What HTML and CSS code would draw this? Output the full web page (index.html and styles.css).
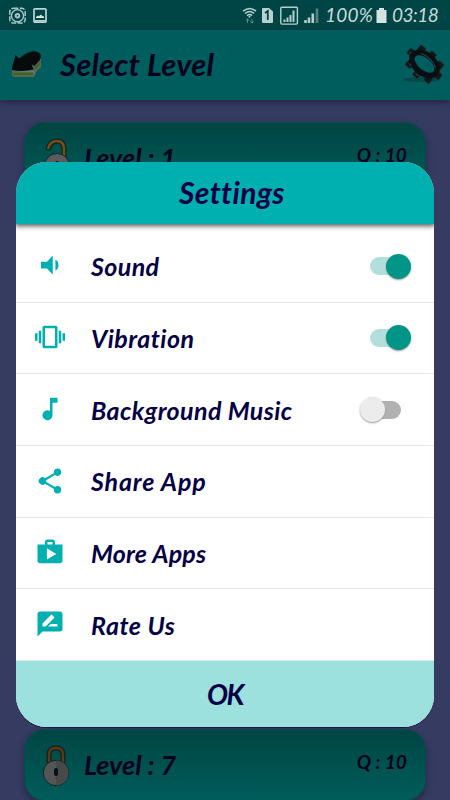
FILE: index.html
```html
<!DOCTYPE html>
<html lang="en">
<head>
<meta charset="utf-8">
<meta name="viewport" content="width=device-width, initial-scale=1">
<title>Settings</title>
<link rel="stylesheet" href="styles.css">
</head>
<body>
<main class="screen">
  <header class="status">
    <svg class="status-left" width="50" height="30" viewBox="0 0 50 30" fill="none" stroke="#a9c9c8">
      <rect x="9.8" y="8.3" width="15.4" height="14.8" rx="3.5" stroke-width="1.5" stroke-dasharray="5 1.5"/>
      <circle cx="17.5" cy="15.7" r="6.1" stroke-width="1.4"/>
      <circle cx="17.5" cy="15.7" r="2.7" fill="#a9c9c8" stroke="none"/>
      <path d="M16.8 14.5v2.4l1.9-1.2z" fill="#004545" stroke="none"/>
      <rect x="34" y="8.8" width="12" height="13.4" rx="1" stroke="#bcd5d4" stroke-width="1.7"/>
      <path d="M36 18v-1l2-1.5 1 .7 2-1.7 1.3 1.4 1.7.5V18z" fill="#d9e7e6" stroke="none"/>
      <path d="M35 20.8h10" stroke="#bcd5d4" stroke-width="1.5"/>
    </svg>
    <div class="status-right">
      <svg width="84" height="30" viewBox="0 0 84 30" fill="none" stroke="#b4cfce">
        <path d="M2 11.2q7-5.5 13 0M4 13.5q4.800-4 9 0M6 15.700q2.800-2.300 5 0" stroke-width="1.500"/>
        <circle cx="8.500" cy="16.700" r="1" fill="#b4cfce" stroke="none"/>
        <path d="M6.500 23v-4m-1.500 1.500 1.500-1.700 1.500 1.700M11 19v4m-1.500-1.500 1.500 1.700 1.500-1.700" stroke="#5f8c8b"/>
        <path d="M22 8h6l4 3.500V22q0 1-1 1h-9q-1 0-1-1V9q0-1 1-1z" fill="#b9d2d1" stroke="none"/>
        <path d="m24 13 2.800-2v9" stroke="#004545" stroke-width="1.800"/>
        <rect x="39.800" y="7.300" width="16.600" height="16.800" rx="1" stroke-width="1.400"/>
        <path d="M43.500 22v-2.500M46.500 22v-4.500M49.500 22v-7M52.500 22V10.500" stroke-width="2"/>
        <path d="M64.500 23v-3M68 23v-5.500M71.800 23v-9.500" stroke-width="2.600"/>
        <path d="M76 23V8.500" stroke="#558483" stroke-width="2.600"/>
      </svg>
      <span class="percent">100%</span>
      <svg class="battery" width="11" height="30" viewBox="0 0 11 30"><path d="M3 8h5v2h2.500v13H.5V10H3z" fill="#d5e4e3"/></svg>
      <span class="clock">03:18</span>
    </div>
  </header>
  <nav class="appbar">
    <svg class="back" width="32" height="30" viewBox="0 0 32 30">
      <path d="M2 18v7q0 2 2 2h20l2-5 5-5V7L20 18z" fill="#59645f"/>
      <path d="M3 23h20v2H3zM24 17l6-5v3l-5 5z" fill="#3c6a10"/>
      <path d="M2 19.500q10 3 21 1.500l2 3" fill="none" stroke="#77807c" stroke-width="1"/>
      <path d="M2 18 5.500 5l4 3.500q5-5 12-7 6-1 9 3 1 3-1 6l-5 5.500-3-2 2 5.500q-11 2.500-21.500.5z" fill="#080b0b"/>
    </svg>
    <h1 class="title">Select Level</h1>
    <svg class="gear" width="42" height="40" viewBox="0 0 42 40">
      <ellipse cx="18" cy="34.500" rx="18" ry="2.500" fill="#044849"/>
      <g transform="translate(21.500 19) rotate(39)" fill="none">
        <g fill="#12191c" stroke="#293236" stroke-width=".6">
          <rect x="-21" y="-4" width="7" height="7" rx="1.500"/><rect x="14" y="-3" width="7" height="7" rx="1.500"/>
          <rect x="-15" y="-13" width="7" height="7" rx="1.500"/><rect x="-3" y="-15" width="7" height="7" rx="1.500"/><rect x="9" y="-12" width="7" height="7" rx="1.500"/>
          <rect x="-15" y="6" width="7" height="7" rx="1.500"/><rect x="-3" y="9" width="7" height="7" rx="1.500"/><rect x="9" y="6" width="7" height="7" rx="1.500"/>
        </g>
        <ellipse rx="14.500" ry="9" stroke="#090f11" stroke-width="5.500"/>
        <path d="M-9-6Q1-10 11-4M-12 9l3 1M-1 13h4M-18-1v3" stroke="#273944" stroke-width="1.200"/>
      </g>
    </svg>
  </nav>
  <section class="levels">
    <article class="card">
      <svg class="lock" width="30" height="46" viewBox="0 0 30 46">
        <path d="M5 12Q7 3 14 3q7 0 7 8v9" fill="none" stroke="#152019" stroke-width="5"/>
        <path d="M5 11Q7 3 14 3q7 0 7 8v9" fill="none" stroke="#74501a" stroke-width="2.500"/>
        <circle cx="14" cy="28" r="12.500" fill="#5b5b5b" stroke="#142624"/><path d="M14 25v4" stroke="#090f18" stroke-width="4" stroke-linecap="round"/>
      </svg>
      <span class="level">Level : 1</span><span class="count">Q : 10</span>
    </article>
    <article class="card">
      <svg class="lock closed" width="30" height="46" viewBox="0 0 30 46">
        <path d="M7 18V10q0-7 7-7 7 0 7 7v8" fill="none" stroke="#151f1a" stroke-width="5"/>
        <path d="M7 18V10q0-7 7-7 7 0 7 7v8" fill="none" stroke="#553b19" stroke-width="2.500"/>
        <circle cx="14" cy="28" r="12.700" fill="#545656" stroke="#102422"/>
        <path d="M14 15.500v25a12.500 12.500 0 0 0 0-25" fill="#484a4a"/><path d="M14 25v4" stroke="#090f18" stroke-width="4" stroke-linecap="round"/>
      </svg>
      <span class="level">Level : 7</span><span class="count">Q : 10</span>
    </article>
  </section>
  <section class="dialog" role="dialog" aria-label="Settings">
    <h2 class="dialog-title">Settings</h2>
    <ul class="options">
      <li><svg class="icon" viewBox="0 0 24 24"><path d="M4.800 8.500V14h4.800l4.600 4.800V3.500L9.600 8.500zM16.300 7v8.500q2.500-1 2.500-4.200t-2.500-4.300z"/></svg><span class="label sound">Sound</span><i class="switch on"></i></li>
      <li><svg class="icon" viewBox="0 0 24 24"><path d="M0 15h2V9H0zm3 2h2V7H3zm19-8v6h2V9zm-3 8h2V7h-2zM16.500 3h-9C6.700 3 6 3.700 6 4.500v15c0 .8.700 1.500 1.500 1.500h9c.8 0 1.500-.7 1.500-1.500v-15c0-.8-.7-1.500-1.500-1.500zM16 19H8V5h8z"/></svg><span class="label vibration">Vibration</span><i class="switch on"></i></li>
      <li><svg class="icon" viewBox="0 0 24 24"><path d="M12 3v10.550A4 4 0 1 0 14 17V7h4V3z"/></svg><span class="label music">Background Music</span><i class="switch"></i></li>
      <li><svg class="icon" viewBox="0 0 24 24"><path d="M18 16.080c-.76 0-1.440.3-1.960.77L8.910 12.700c.05-.23.090-.46.090-.7s-.04-.47-.09-.7l7.050-4.110A3 3 0 1 0 15 5c0 .24.040.47.090.7L8.040 9.810A3 3 0 1 0 8.040 14.190l7.120 4.160c-.05.21-.08.43-.08.650A2.920 2.920 0 1 0 18 16.080z"/></svg><span class="label share">Share App</span></li>
      <li><svg class="icon" viewBox="0 0 24 24"><path fill-rule="evenodd" d="M16 6V4c0-1.110-.89-2-2-2h-4c-1.110 0-2 .89-2 2v2H2v13c0 1.110.89 2 2 2h16c1.110 0 2-.89 2-2V6zm-6-2h4v2h-4zM9.500 18V9l7.500 4.500z"/></svg><span class="label more">More Apps</span></li>
      <li><svg class="icon" viewBox="0 0 24 24"><path fill-rule="evenodd" d="M20 2H4c-1.100 0-2 .9-2 2v18l4-4h14c1.100 0 2-.9 2-2V4c0-1.100-.9-2-2-2zM6 14v-2.470l6.880-6.880c.2-.2.510-.2.710 0l1.770 1.770c.2.200.2.510 0 .710L8.470 14zm12 0h-7.500l2-2H18z"/></svg><span class="label rate">Rate Us</span></li>
    </ul>
    <button class="ok">OK</button>
  </section>
</main>
</body>
</html>
```

FILE: styles.css
```css
* { box-sizing: border-box; }
body { margin: 0; font-family: Lato, "Liberation Sans", sans-serif; }
h1, h2, ul { margin: 0; padding: 0; }
svg { display: block; flex: none; }
.screen { position: relative; width: 450px; height: 800px; overflow: hidden; background: #353b61; font-style: italic; color: #02021d; }
.status { height: 30px; display: flex; justify-content: space-between; background: #004545; color: #c6dada; }
.status-right { display: flex; align-items: center; width: 209px; font-size: 19px; line-height: 30px; white-space: nowrap; }
.percent { width: 49px; letter-spacing: .2px; }
.battery { margin: 0 5px 0 2px; }
.clock { letter-spacing: -.5px; }
.appbar { height: 70px; display: flex; align-items: center; padding: 0 5px 0 10px; background: #005d5d; box-shadow: 0 2px 6px #202541; }
.title { margin: -2px 0 0 18px; font-size: 31px; font-weight: 700; line-height: 40px; letter-spacing: .2px; }
.gear { margin-left: auto; }
.levels { display: flex; flex-direction: column; justify-content: space-between; height: 679px; margin: 22px 24px 0; }
.card { height: 72px; display: flex; align-items: flex-start; padding: 15px 18px 0; border: 1px solid #094947; border-radius: 21px; background: linear-gradient(#004543, #005d5b); box-shadow: 0 3px 6px #242946; }
.lock.closed { margin-left: -1px; margin-right: 1px; }
.level { margin: 3px 0 0 11px; font-size: 27px; font-weight: 700; line-height: 34px; letter-spacing: 0; }
.count { margin: 0 0 0 auto; font-size: 19px; font-weight: 700; line-height: 34px; letter-spacing: .1px; }
.dialog { position: absolute; left: 16px; top: 162px; width: 418px; height: 565px; display: flex; flex-direction: column; overflow: hidden; border-radius: 31px; background: #fff; color: #050044; box-shadow: 0 1px 0 #151944; }
.dialog-title { height: 62px; flex: none; padding-left: 14px; background: #00b0b0; text-align: center; font-size: 30px; font-weight: 700; line-height: 61px; letter-spacing: .4px; box-shadow: 0 1px 5px 1px #555; z-index: 1; }
.options { list-style: none; padding-top: 7px; height: 438px; display: grid; grid-template-rows: repeat(6, 1fr); }
.options li { display: flex; align-items: center; padding: 0 23px 0 19px; border-bottom: 1px solid #e5e5e5; }
.icon { width: 30px; height: 30px; margin-bottom: 1px; fill: #00b0b0; }
.label { margin-left: 26px; font-size: 25px; font-weight: 700; line-height: 34px; white-space: nowrap; }
.sound { letter-spacing: .4px; }
.vibration { letter-spacing: .5px; }
.music { letter-spacing: .4px; }
.share { letter-spacing: .85px; }
.more { letter-spacing: .2px; }
.rate { letter-spacing: .5px; }
.switch { position: relative; width: 51px; height: 30px; margin-left: auto; display: flex; align-items: center; }
.switch::before { content: ""; width: 31px; height: 18px; margin-left: 10px; border-radius: 9px; background: #b1b1b1; }
.switch::after { content: ""; position: absolute; left: 0; top: 2.500px; width: 25px; height: 25px; border-radius: 50%; background: #ececec; box-shadow: 0 1px 2px #999; }
.switch.on::before { background: #b2dfdb; }
.switch.on::after { left: 26px; background: #009587; }
.ok { flex: 1; border: 0; background: #9ce1de; color: inherit; font: italic 700 28px/66px Lato, sans-serif; padding: 0; letter-spacing: -1.500px; }
```
